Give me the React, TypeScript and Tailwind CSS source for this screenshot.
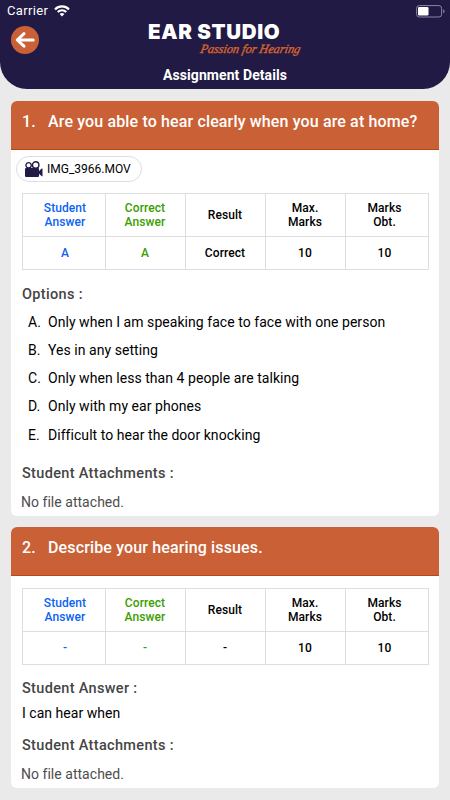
import React from 'react';

interface Cell {
  label: string[];
  value: string;
  color: string;
}

interface HeaderProps {
  title: string;
}

interface CardProps {
  number: number;
  question: string;
  cells: Cell[];
  children: React.ReactNode;
  file?: string;
}

const OPTIONS = [
  { key: 'A.', text: 'Only when I am speaking face to face with one person' },
  { key: 'B.', text: 'Yes in any setting' },
  { key: 'C.', text: 'Only when less than 4 people are talking' },
  { key: 'D.', text: 'Only with my ear phones' },
  { key: 'E.', text: 'Difficult to hear the door knocking' },
];

const buildCells = (student: string, correct: string, result: string): Cell[] => [
  { label: ['Student', 'Answer'], value: student, color: 'pl-[2px] text-[#0b62f5]' },
  { label: ['Correct', 'Answer'], value: correct, color: 'pr-[1px] text-[#3a9e00]' },
  { label: ['Result'], value: result, color: 'pr-[1px] text-black' },
  { label: ['Max.', 'Marks'], value: '10', color: 'pr-[1px] text-black' },
  { label: ['Marks', 'Obt.'], value: '10', color: 'pr-[5px] text-black' },
];

const WifiIcon = () => (
  <svg width="16" height="12" viewBox="0 0 16 12" fill="none" stroke="white" strokeWidth="2.1">
    <path d="M1 4.4C4.9 .4 11.1 .4 15 4.4" />
    <path d="M3.7 7.1C6.2 4.7 9.8 4.7 12.3 7.1" />
    <path d="M5.6 8.9Q8 6.9 10.4 8.9L8 11.4Z" fill="white" stroke="none" />
  </svg>
);

const BatteryIcon = () => (
  <svg width="29" height="13" viewBox="0 0 29 13" fill="none">
    <rect x=".6" y=".6" width="25" height="11.4" rx="2.7" stroke="#8a869f" />
    <rect x="2" y="2" width="10.5" height="8.5" rx="1.2" fill="white" />
    <path d="M27.2 4.3Q28.5 4.8 28.5 6.3Q28.5 7.8 27.2 8.3Z" fill="#8a869f" />
  </svg>
);

const CameraIcon = () => (
  <svg width="18" height="17" viewBox="0 0 18 17" fill="#201a44">
    <circle cx="3.6" cy="4.3" r="2.7" fill="white" stroke="#201a44" strokeWidth="1.3" />
    <circle cx="10.7" cy="4" r="3.2" fill="white" stroke="#201a44" strokeWidth="1.4" />
    <path d="M1.2 7.1H13Q14 7.1 14 8.1V10L16.8 7.6H17.5V15.2H16.8L14 12.8V14.9Q14 16 12.9 16H1.1Q0 16 0 14.9V8.2Q0 7.1 1.2 7.1Z" />
  </svg>
);

const Header: React.FC<HeaderProps> = ({ title }) => (
  <header className="relative h-[89px] shrink-0 rounded-b-[27px] bg-[#201a44] text-white">
    {/* Status bar */}
    <div className="flex h-[22px] items-center pl-[7px] pr-[5px]">
      <span className="text-[13px] tracking-[0.35px]">Carrier</span>
      <span className="ml-[6px]"><WifiIcon /></span>
      <span className="ml-auto"><BatteryIcon /></span>
    </div>
    <button
      type="button"
      title="Back"
      className="absolute left-[11px] top-[26px] flex size-[28px] items-center justify-center rounded-full bg-[#ca6136]"
    >
      <svg width="20" height="18" viewBox="0 0 20 18" fill="none" stroke="white" strokeWidth="3" strokeLinecap="round" strokeLinejoin="round">
        <path d="M9 2.7L2.2 9L9 15.2M2.5 9H18.2" />
      </svg>
    </button>
    {/* Logo */}
    <div className="flex h-[43px] flex-col pl-[148px]">
      <span className="h-[20px] whitespace-nowrap font-['Inter'] text-[20.5px] font-black leading-[20px] tracking-[0.65px]">EAR STUDIO</span>
      <svg width="110" height="18" viewBox="0 0 110 18" className="ml-[50px] overflow-visible">
        <text
          x="2"
          y="11"
          textLength="100"
          lengthAdjust="spacingAndGlyphs"
          fill="#d8622e"
          stroke="#d8622e"
          strokeWidth=".4"
          fontFamily="'Liberation Serif', serif"
          fontStyle="italic"
          fontSize="12.5"
          transform="skewX(-12) translate(2 0)"
        >
          Passion for Hearing
        </text>
      </svg>
    </div>
    <h1 className="text-center text-[14px] font-bold leading-[20px] tracking-[0.08px]">{title}</h1>
  </header>
);

const AnswerTable: React.FC<{ cells: Cell[] }> = ({ cells }) => (
  <div className="ml-[11px] grid h-[77px] w-[407px] grid-cols-[83px_80px_80px_80px_83px] grid-rows-[43px_33px] border-l border-t border-[#dedede] text-center text-[12px] font-medium leading-[14px] tracking-[0.08px]">
    {cells.map((cell, i) => (
      <div key={i} className={`flex flex-col items-center justify-center border-b border-r border-[#dedede] ${cell.color}`}>
        {cell.label.map((line) => <span key={line}>{line}</span>)}
      </div>
    ))}
    {cells.map((cell, i) => (
      <div key={i} className={`flex items-center justify-center border-b border-r border-[#dedede] ${cell.color}`}>
        {cell.value}
      </div>
    ))}
  </div>
);

const QuestionCard: React.FC<CardProps> = ({ number, question, cells, children, file }) => (
  <section className="overflow-hidden rounded-[6px] bg-white">
    <h2 className="flex h-[49px] border-b border-[#bd4614] bg-[#ca6136] pl-[11px] pt-[11px] text-[16px] font-medium leading-[20px] tracking-[0.14px] text-white">
      <span className="w-[26px]">{number}.</span>
      <span className="whitespace-nowrap">{question}</span>
    </h2>
    {file ? (
      <div className="flex h-[43px] pl-[5px] pt-[6px]">
        <div className="flex h-[26px] w-[126px] items-center rounded-full border border-[#dedede] pl-[8px] text-[12px]">
          <CameraIcon />
          <span className="ml-[4px]">{file}</span>
        </div>
      </div>
    ) : (
      <div className="h-[12px]" />
    )}
    <AnswerTable cells={cells} />
    {children}
  </section>
);

const Label: React.FC<{ children: React.ReactNode }> = ({ children }) => (
  <h3 className="pl-[11px] text-[14.5px] font-medium leading-[20px] tracking-[0.33px] text-[#454545]">{children}</h3>
);

const Attachments = () => (
  <>
    <Label>Student Attachments :</Label>
    <p className="pl-[10px] pt-[8px] text-[14px] leading-[20px] tracking-[0.03px] text-[#4d4d4d]">No file attached.</p>
  </>
);

const App: React.FC = () => (
  <div className="flex h-[800px] w-[450px] flex-col overflow-hidden bg-[#eaeaea] font-['Roboto',sans-serif] text-black">
    <Header title="Assignment Details" />
    <main className="flex flex-col gap-[11px] px-[11px] pt-[12px]">
      <QuestionCard
        number={1}
        question="Are you able to hear clearly when you are at home?"
        cells={buildCells('A', 'A', 'Correct')}
        file="IMG_3966.MOV"
      >
        <div className="h-[246px] pt-[15px]">
          <Label>Options :</Label>
          <ul className="pb-[15px] pt-[3px] text-[14px] tracking-[0.05px]">
            {OPTIONS.map((option) => (
              <li key={option.key} className="flex h-[28.25px] items-center pl-[17px]">
                <span className="w-[20px]">{option.key}</span>
                <span>{option.text}</span>
              </li>
            ))}
          </ul>
          <Attachments />
        </div>
      </QuestionCard>
      <QuestionCard
        number={2}
        question="Describe your hearing issues."
        cells={buildCells('-', '-', '-')}
      >
        <div className="h-[123px] pt-[14px]">
          <Label>Student Answer :</Label>
          <p className="pb-[13px] pl-[11px] pt-[4px] text-[14px] leading-[20px] tracking-[0.03px]">I can hear when</p>
          <Attachments />
        </div>
      </QuestionCard>
    </main>
  </div>
);

export default App;
